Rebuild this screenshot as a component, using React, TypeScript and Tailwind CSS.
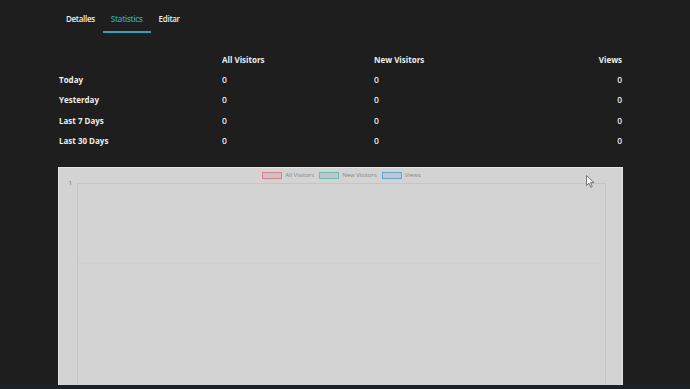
import React from "react";

const rows = [
  { label: "Today", all: 0, fresh: 0, views: 0 },
  { label: "Yesterday", all: 0, fresh: 0, views: 0 },
  { label: "Last 7 Days", all: 0, fresh: 0, views: 0 },
  { label: "Last 30 Days", all: 0, fresh: 0, views: 0 },
];

const legend = [
  { name: "All Visitors", border: "border-[#e47b8f]" },
  { name: "New Visitors", border: "border-[#66bdb6]" },
  { name: "Views", border: "border-[#5fa3d8]" },
];

function Tabs() {
  const tabs = ["Detalles", "Statistics", "Editar"];
  return (
    <div className="flex">
      {tabs.map((t) => {
        const active = t === "Statistics";
        return (
          <div
            key={t}
            className={`px-2 pt-[12px] pb-[5px] text-[8px] leading-[14px] font-semibold tracking-[-0.3px] border-b-2 ${
              active ? "text-[#2aa3bb] border-[#2aa3bb]" : "text-[#ececec] border-transparent"
            }`}
          >
            {t}
          </div>
        );
      })}
    </div>
  );
}

function StatsTable() {
  return (
    <div className="mt-[21px] grid grid-cols-[163px_152px_1fr_auto] text-[8px] leading-[12px] text-[#eeeeee] pl-px pr-px">
      <div className="h-[20px]" />
      <div className="h-[20px] font-bold">All Visitors</div>
      <div className="h-[20px] font-bold">New Visitors</div>
      <div className="h-[20px] font-bold text-right">Views</div>
      {rows.map((r) => (
        <React.Fragment key={r.label}>
          <div className="h-[20.4px] font-bold">{r.label}</div>
          <div className="h-[20.4px] text-[8.5px] font-semibold">{r.all}</div>
          <div className="h-[20.4px] text-[8.5px] font-semibold">{r.fresh}</div>
          <div className="h-[20.4px] text-[8.5px] font-semibold text-right">{r.views}</div>
        </React.Fragment>
      ))}
    </div>
  );
}

function Chart() {
  return (
    <div className="relative mt-[11px] h-[240px] bg-[#d3d3d3] border border-[#e4e4e4] flex flex-col">
      <div className="flex justify-center items-center gap-[5px] h-[15px] pl-[2px] text-[6px] text-[#858585]">
        {legend.map((l) => (
          <div key={l.name} className="flex items-center gap-[3px]">
            <span className={`block w-[20px] h-[7px] bg-[#c6c6c6] border ${l.border}`} />
            <span>{l.name}</span>
          </div>
        ))}
      </div>
      <div className="flex flex-1">
        <div className="w-[18px] relative">
          <span className="absolute right-[5px] -top-[4px] text-[6px] leading-[8px] text-[#6a6a6a]">1</span>
        </div>
        <div className="flex-1 mr-[16px] border-l border-t border-r border-[#c5c5c5] flex flex-col">
          <div className="h-[80px] border-b border-[#d0d0d0]" />
        </div>
      </div>
      {/* mouse cursor */}
      <svg className="absolute left-[527px] top-[7px]" width="9" height="13" viewBox="0 0 9 13">
        <path d="M0.5 0.5 L0.5 10.5 L3 8.2 L4.8 12.3 L6.3 11.6 L4.6 7.6 L8 7.6 Z" fill="#f4f4f4" stroke="#5c5c5c" strokeWidth="0.8" />
      </svg>
    </div>
  );
}

export default function App() {
  return (
    <div className="w-[690px] h-[389px] bg-[#1e1e1e] overflow-hidden flex flex-col" style={{ fontFamily: '"Open Sans", "Noto Sans", sans-serif' }}>
      <div className="h-[385px] overflow-hidden">
        <div className="ml-[58px] w-[565px]">
          <Tabs />
          <StatsTable />
          <Chart />
        </div>
      </div>
      <div className="h-[4px] bg-[#1b2128]" />
    </div>
  );
}
